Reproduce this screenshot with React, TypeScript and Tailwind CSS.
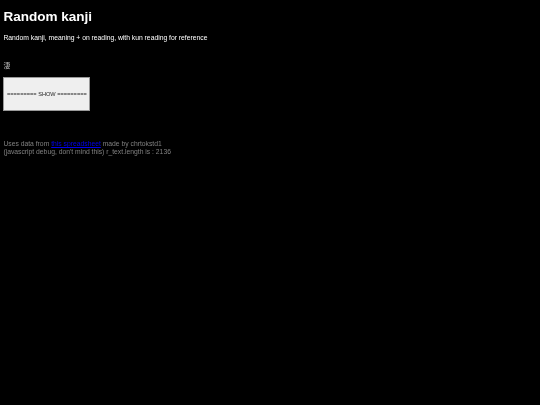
export default function App() {
  return (
    <div className="min-h-[405px] bg-black">
      <div className="px-[3.4px] text-[6.77px] leading-[7.8px] text-white blur-[0.35px] font-['Liberation_Sans','Noto_Sans_CJK_JP',sans-serif]">
        <h1 className="pt-[9px] text-[13.54px] leading-[15.6px] font-bold">Random kanji</h1>
        <p className="mt-[9px]">Random kanji, meaning + on reading, with kun reading for reference</p>

        {/* kanji + reveal button */}
        <p className="mt-[21px] text-[#bbb]">淒</p>
        <button className="mt-[7px] block h-[34px] w-[87px] border border-[#999] bg-[#efefef] pt-px text-center text-[5.64px] whitespace-nowrap text-[#222]">
          ========= SHOW =========
        </button>

        <div className="mt-[29px] text-[#808080]">
          <p>
            Uses data from <a href="#" className="text-[#0000ee] underline">this spreadsheet</a> made by chrtokstd1
          </p>
          <p>(javascript debug, don't mind this) r_text.length is : 2136</p>
        </div>
      </div>
    </div>
  );
}
